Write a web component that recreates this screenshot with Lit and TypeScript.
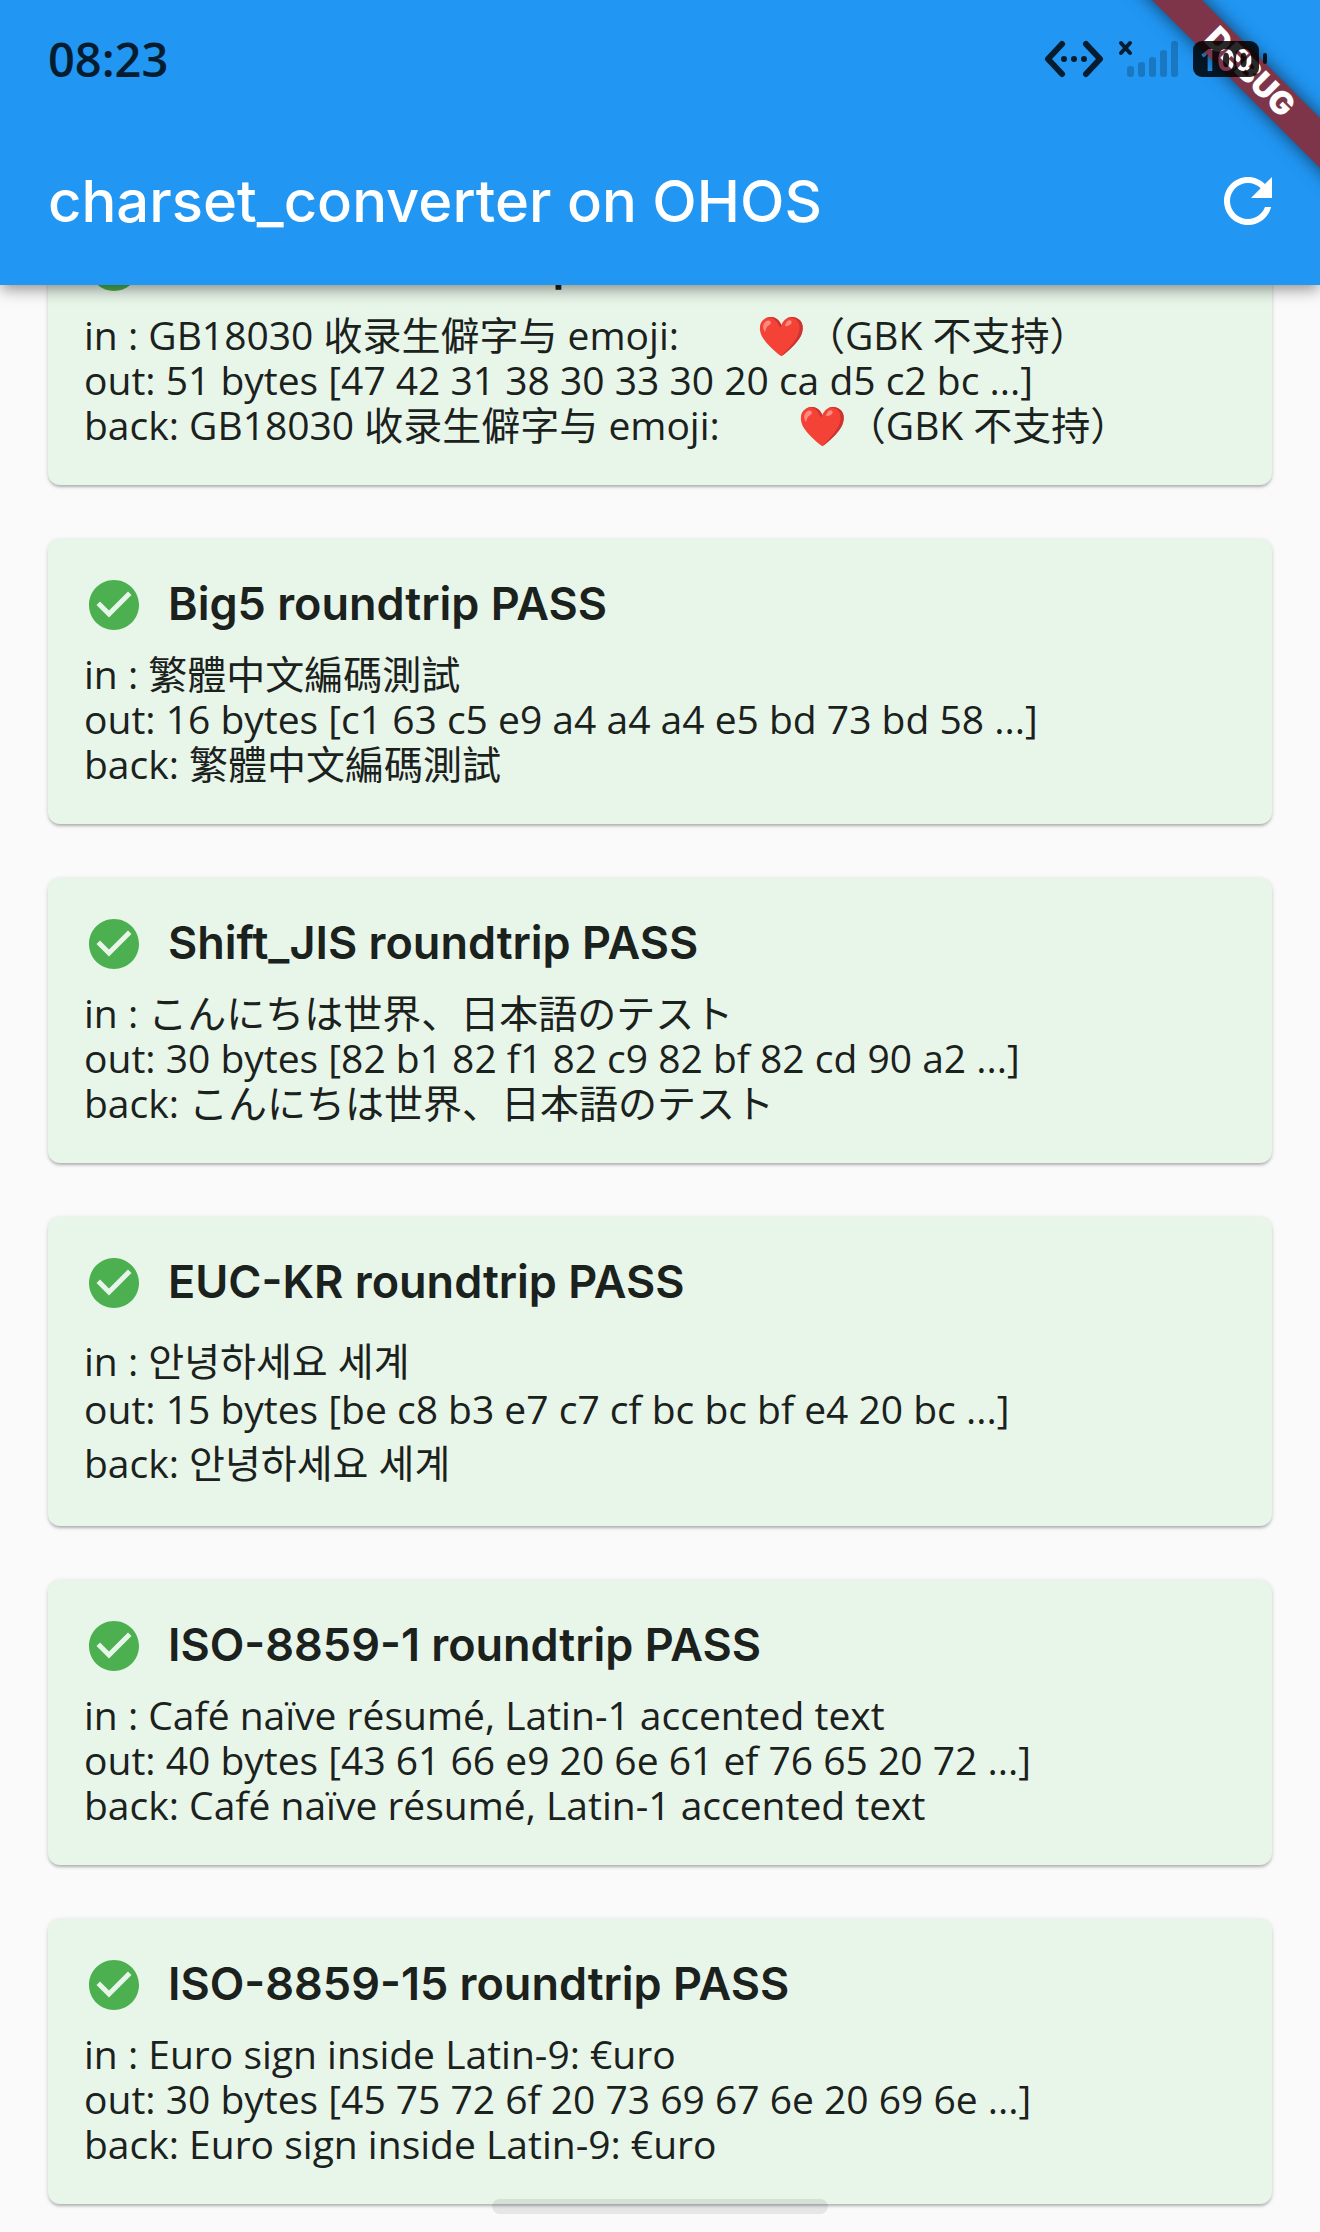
import { LitElement, html, css, svg } from "lit";
import { customElement, property, state } from "lit/decorators.js";
import { classMap } from "lit/directives/class-map.js";

interface Result {
  charset: string;
  lang: string;
  text: string;
  size: number;
  bytes: string;
}

const RESULTS: Result[] = [
  { charset: "GB18030", lang: "zh-Hans", text: "GB18030 收录生僻字与 emoji:\u3000\u3000❤️（GBK 不支持）", size: 51, bytes: "47 42 31 38 30 33 30 20 ca d5 c2 bc" },
  { charset: "Big5", lang: "zh-Hant", text: "繁體中文編碼測試", size: 16, bytes: "c1 63 c5 e9 a4 a4 a4 e5 bd 73 bd 58" },
  { charset: "Shift_JIS", lang: "ja", text: "こんにちは世界、日本語のテスト", size: 30, bytes: "82 b1 82 f1 82 c9 82 bf 82 cd 90 a2" },
  { charset: "EUC-KR", lang: "ko", text: "안녕하세요 세계", size: 15, bytes: "be c8 b3 e7 c7 cf bc bc bf e4 20 bc" },
  { charset: "ISO-8859-1", lang: "en", text: "Café naïve résumé, Latin-1 accented text", size: 40, bytes: "43 61 66 e9 20 6e 61 ef 76 65 20 72" },
  { charset: "ISO-8859-15", lang: "en", text: "Euro sign inside Latin-9: €uro", size: 30, bytes: "45 75 72 6f 20 73 69 67 6e 20 69 6e" },
];

@customElement("status-bar")
class StatusBar extends LitElement {
  static styles = css`
    :host {
      display: flex;
      align-items: center;
      justify-content: space-between;
      height: 117px;
      padding: 0 48px;
      color: #061d30;
      font-size: 47px;
      font-weight: 600;
    }
    .clock { line-height: 50px; }
    .icons { display: block; width: 232px; height: 48px; }
    .battery-level { font-size: 31px; font-weight: 700; }
  `;

  render() {
    const bars: [number, number][] = [[87, 31], [98, 27], [109, 22], [120, 15], [131, 6]];
    return html`
      <time class="clock">08:23</time>
      <svg class="icons" viewBox="0 0 232 48" role="img" aria-label="Status">
        <g fill="none" stroke="#061d30" stroke-linecap="round" stroke-linejoin="round">
          <path stroke-width="6" d="M22 9 8 24 22 39M46 9 60 24 46 39" />
          <path stroke-width="4" d="M81 8 90 18M90 8 81 18" />
        </g>
        <g fill="#061d30">
          <circle cx="24" cy="24" r="3" /><circle cx="34" cy="24" r="3" /><circle cx="44" cy="24" r="3" />
        </g>
        ${bars.map(([x, y]) => svg`<rect x=${x} y=${y} width="7" height=${42 - y} rx="3" fill="#000" fill-opacity=".2" />`)}
        <mask id="level">
          <rect width="232" height="48" fill="#fff" />
          <text class="battery-level" x="186" y="36" text-anchor="middle" fill="#000">100</text>
        </mask>
        <rect x="153" y="6" width="66" height="36" rx="9" fill="#000" fill-opacity=".84" mask="url(#level)" />
        <rect x="223" y="18" width="4" height="11" rx="2" fill="#000" fill-opacity=".84" />
      </svg>
    `;
  }
}

@customElement("debug-banner")
class DebugBanner extends LitElement {
  static styles = css`
    :host { display: block; width: 200px; height: 200px; overflow: hidden; }
    svg { display: block; }
    .ribbon { filter: drop-shadow(0 0 9px rgba(0, 0, 0, 0.6)); }
    .word { font-family: "Inter", sans-serif; font-size: 32px; font-weight: 900; }
  `;

  render() {
    return html`
      <svg width="200" height="200" viewBox="0 0 200 200">
        <g class="ribbon"><path d="M-8-40 42-40 240 158 240 208Z" fill="#7e3549" /></g>
        <text class="word" transform="translate(130 72) rotate(45)" y="11" text-anchor="middle" fill="#fff">DEBUG</text>
      </svg>
    `;
  }
}

@customElement("result-card")
class ResultCard extends LitElement {
  @property({ attribute: false }) result!: Result;

  static styles = css`
    :host { display: block; }
    .card {
      padding: 36px 36px 38px;
      border-radius: 12px;
      background: #e8f5e9;
      box-shadow: 0 3px 3px -1px rgba(0, 0, 0, 0.22), 0 1px 5px rgba(0, 0, 0, 0.14);
    }
    .head { display: flex; gap: 24px; height: 60px; margin-bottom: 16px; }
    .check { flex: none; width: 60px; height: 60px; }
    .title { margin: 0; font-family: "Inter", sans-serif; font-size: 45px; font-weight: 600; line-height: 58px; }
    .line { margin: 0; line-height: 45px; }
    .zh-Hant { font-family: "Open Sans", "Noto Sans CJK TC", sans-serif; }
    .ja { font-family: "Open Sans", "Noto Sans CJK JP", sans-serif; }
    .ko { font-family: "Open Sans", "Noto Sans CJK KR", sans-serif; }
    .ko .sample { padding: 9px 0 3px; }
  `;

  render() {
    const r = this.result;
    return html`
      <article class=${classMap({ card: true, [r.lang]: true })} lang=${r.lang}>
        <header class="head">
          <svg class="check" viewBox="0 0 24 24" fill="#4caf50" aria-hidden="true">
            <path d="M12 2C6.48 2 2 6.48 2 12s4.48 10 10 10 10-4.48 10-10S17.52 2 12 2zm-2 15-5-5 1.41-1.41L10 14.17l7.59-7.59L19 8l-9 9z" />
          </svg>
          <h2 class="title">${r.charset} roundtrip PASS</h2>
        </header>
        <p class="line sample">in : ${r.text}</p>
        <p class="line">out: ${r.size} bytes [${r.bytes} ...]</p>
        <p class="line sample">back: ${r.text}</p>
      </article>
    `;
  }
}

@customElement("app-root")
class AppRoot extends LitElement {
  @state() private results = RESULTS;

  static styles = css`
    :host {
      position: relative;
      display: flex;
      flex-direction: column;
      height: 100vh;
      overflow: hidden;
      background: #fafafa;
      color: #1b211c;
      font-family: "Open Sans", "Noto Sans CJK SC", sans-serif;
      font-size: 39px;
    }
    .top {
      position: relative;
      z-index: 1;
      flex: none;
      background: #2196f3;
      box-shadow: 0 6px 12px -3px rgba(0, 0, 0, 0.26), 0 6px 16px rgba(0, 0, 0, 0.2);
    }
    .status { position: relative; z-index: 2; }
    .banner { position: absolute; top: 0; right: 0; z-index: 1; pointer-events: none; }
    .bar {
      display: flex;
      align-items: center;
      justify-content: space-between;
      height: 168px;
      padding: 0 36px 0 48px;
      color: #fff;
    }
    .heading { margin: 0; font-family: "Inter", sans-serif; font-size: 58px; font-weight: 500; }
    .refresh { width: 72px; height: 72px; padding: 0; border: 0; background: none; color: inherit; cursor: pointer; }
    .refresh svg { display: block; width: 72px; height: 72px; }
    .list {
      flex: 1;
      min-height: 0;
      box-sizing: border-box;
      padding: 28px 48px;
      overflow-y: auto;
      scrollbar-width: none;
    }
    .stack { display: grid; gap: 54px; }
    .home {
      position: absolute;
      bottom: 18px;
      left: 50%;
      z-index: 1;
      width: 336px;
      height: 15px;
      margin-left: -168px;
      border-radius: 8px;
      background: rgba(0, 0, 0, 0.08);
    }
  `;

  async firstUpdated() {
    const list = this.renderRoot.querySelector(".list")!;
    await Promise.all([...this.renderRoot.querySelectorAll<ResultCard>("result-card")].map((c) => c.updateComplete));
    list.scrollTop = list.scrollHeight;
  }

  private refresh() {
    this.results = [...RESULTS];
  }

  render() {
    return html`
      <div class="top">
        <status-bar class="status"></status-bar>
        <header class="bar">
          <h1 class="heading">charset_converter on OHOS</h1>
          <button class="refresh" aria-label="Refresh" @click=${this.refresh}>
            <svg viewBox="0 0 24 24" fill="currentColor" aria-hidden="true">
              <path d="M17.65 6.35C16.2 4.9 14.21 4 12 4c-4.42 0-7.99 3.58-7.99 8s3.57 8 7.99 8c3.73 0 6.84-2.55 7.73-6h-2.08c-.82 2.33-3.04 4-5.65 4-3.31 0-6-2.69-6-6s2.69-6 6-6c1.66 0 3.14.69 4.22 1.78L13 11h7V4l-2.35 2.35z" />
            </svg>
          </button>
        </header>
        <debug-banner class="banner"></debug-banner>
      </div>
      <main class="list">
        <div class="stack">
          ${this.results.map((r) => html`<result-card .result=${r}></result-card>`)}
        </div>
      </main>
      <div class="home"></div>
    `;
  }
}
